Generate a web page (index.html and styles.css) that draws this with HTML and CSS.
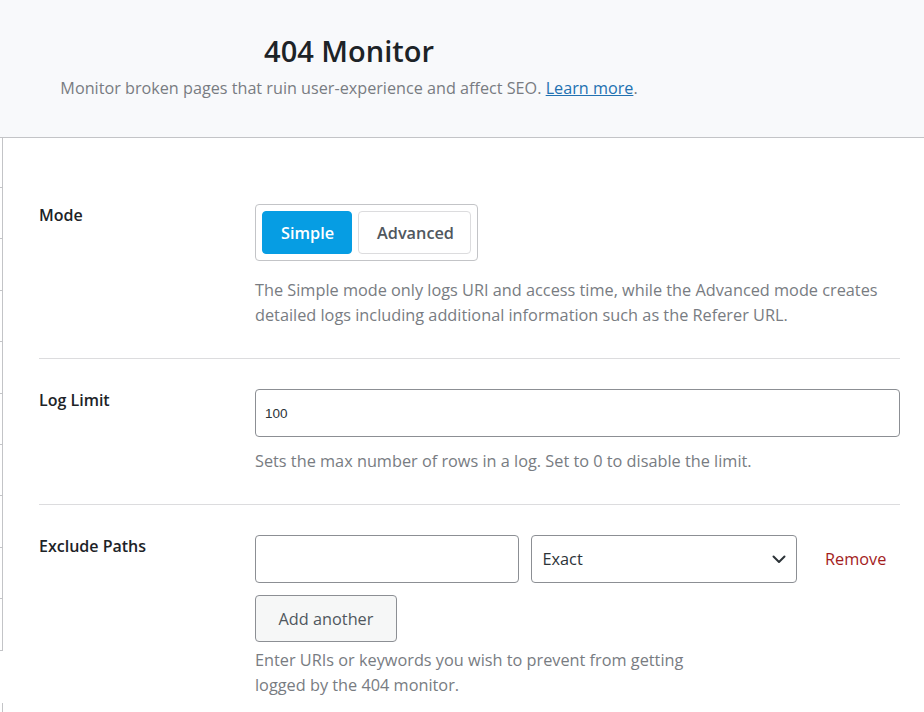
FILE: index.html
```html
<!DOCTYPE html>
<html lang="en">
<head>
<meta charset="utf-8">
<title>404 Monitor</title>
<link rel="stylesheet" href="styles.css">
</head>
<body>
<header class="head">
  <div class="head-inner">
    <h1 class="title">404 Monitor</h1>
    <p class="subtitle">Monitor broken pages that ruin user-experience and affect SEO. <a href="#" class="learn">Learn more</a>.</p>
  </div>
</header>
<div class="page">
  <div class="edge">
    <div class="edge-cell"></div><div class="edge-cell"></div><div class="edge-cell"></div><div class="edge-cell"></div><div class="edge-cell"></div>
    <div class="edge-cell"></div><div class="edge-cell"></div><div class="edge-cell"></div><div class="edge-cell"></div><div class="edge-cell"></div>
    <div class="edge-cell edge-next"></div>
  </div>
  <main class="body">
    <section class="row">
      <div class="label">Mode</div>
      <div class="control">
        <div class="segmented">
          <button class="seg seg-active">Simple</button>
          <button class="seg">Advanced</button>
        </div>
        <p class="desc desc-mode">The Simple mode only logs URI and access time, while the Advanced mode creates detailed logs including additional information such as the Referer URL.</p>
      </div>
    </section>
    <section class="row">
      <div class="label">Log Limit</div>
      <div class="control">
        <input class="field field-num" type="text" value="100">
        <p class="desc">Sets the max number of rows in a log. Set to 0 to disable the limit.</p>
      </div>
    </section>
    <section class="row row-last">
      <div class="label">Exclude Paths</div>
      <div class="control">
        <div class="path-line">
          <input class="field path-input" type="text" value="">
          <div class="select">
            <span class="select-val">Exact</span>
            <svg class="chev" width="14" height="9" viewBox="0 0 14 9"><path d="M1.5 1.5 L7 7 L12.5 1.5" fill="none" stroke="#2c3338" stroke-width="2" stroke-linecap="round" stroke-linejoin="round"/></svg>
          </div>
          <a href="#" class="remove">Remove</a>
        </div>
        <button class="add-btn">Add another</button>
        <p class="desc desc-narrow">Enter URIs or keywords you wish to prevent from getting logged by the 404 monitor.</p>
      </div>
    </section>
  </main>
</div>
</body>
</html>
```
FILE: styles.css
```css
* { box-sizing: border-box; }
html, body { margin: 0; padding: 0; }
body {
  width: 924px;
  height: 712px;
  overflow: hidden;
  background: #ffffff;
  font-family: "Open Sans", "Noto Sans", sans-serif;
  color: #1d2327;
}
.head {
  background: #f8f9fb;
  border-bottom: 1px solid #c3c4c7;
  height: 138px;
}
.head-inner {
  width: 698px;
  text-align: center;
  padding-top: 31px;
}
.title {
  margin: 0;
  font-size: 29px;
  font-weight: 600;
  line-height: 40px;
  color: #1d2327;
}
.subtitle {
  margin: 5px 0 0;
  font-size: 16.2px;
  line-height: 24px;
  color: #787c82;
}
.learn {
  color: #2271b1;
  text-decoration: underline;
}
.page {
  display: flex;
}
.edge {
  width: 3px;
  flex: none;
}
.edge-cell {
  height: 51.4px;
  border-right: 1px solid #c3c4c7;
  border-bottom: 1px solid #c3c4c7;
}
.edge-cell:first-child { height: 50px; }
.edge-next { margin-top: 52px; border-bottom: none; }
.body {
  flex: 1;
  padding: 36px 24px 0 36px;
}
.row {
  display: grid;
  grid-template-columns: 216px 1fr;
  padding: 30px 0;
  border-bottom: 1px solid #dcdcde;
}
.row-last { border-bottom: none; }
.label {
  font-size: 16px;
  font-weight: 600;
  line-height: 24px;
  color: #1d2327;
  margin-top: -1px;
}
.control { min-width: 0; }
.segmented {
  display: inline-flex;
  gap: 6px;
  padding: 6px;
  border: 1px solid #c3c4c7;
  border-radius: 4px;
}
.seg {
  height: 43px;
  padding: 0 18px;
  font-family: inherit;
  font-size: 16.3px;
  font-weight: 600;
  color: #50575e;
  background: #ffffff;
  border: 1px solid #dcdcde;
  border-radius: 4px;
}
.seg-active {
  width: 90px;
  background: #069de3;
  border-color: #069de3;
  color: #ffffff;
}
.seg:not(.seg-active) { width: 113px; }
.desc {
  margin: 12px 0 0;
  font-size: 16.3px;
  line-height: 25px;
  color: #787c82;
}
.desc-mode { margin-top: 17px; }
.desc-narrow { max-width: 450px; margin-top: 6px; }
.field {
  display: block;
  height: 48px;
  border: 1px solid #8c8f94;
  border-radius: 4px;
  background: #fff;
  padding: 0 9px;
  font-family: "Liberation Sans", Arial, sans-serif;
  font-size: 13.5px;
  color: #2c3338;
}
.field-num { width: 100%; }
.path-line {
  display: flex;
  align-items: center;
  gap: 12px;
}
.path-input { flex: 1; width: 0; }
.select {
  flex: 1;
  height: 48px;
  border: 1px solid #8c8f94;
  border-radius: 4px;
  display: flex;
  align-items: center;
  justify-content: space-between;
  padding: 0 10px 0 11px;
  font-size: 16.3px;
  color: #2c3338;
}
.chev { display: block; }
.remove {
  width: 91px;
  padding-left: 16px;
  color: #a31d1d;
  text-decoration: none;
  font-size: 16.3px;
}
.add-btn {
  display: block;
  margin-top: 12px;
  width: 142px;
  height: 47px;
  background: #f6f7f7;
  border: 1px solid #8c8f94;
  border-radius: 4px;
  font-family: inherit;
  font-size: 16.3px;
  color: #50575e;
}
```
